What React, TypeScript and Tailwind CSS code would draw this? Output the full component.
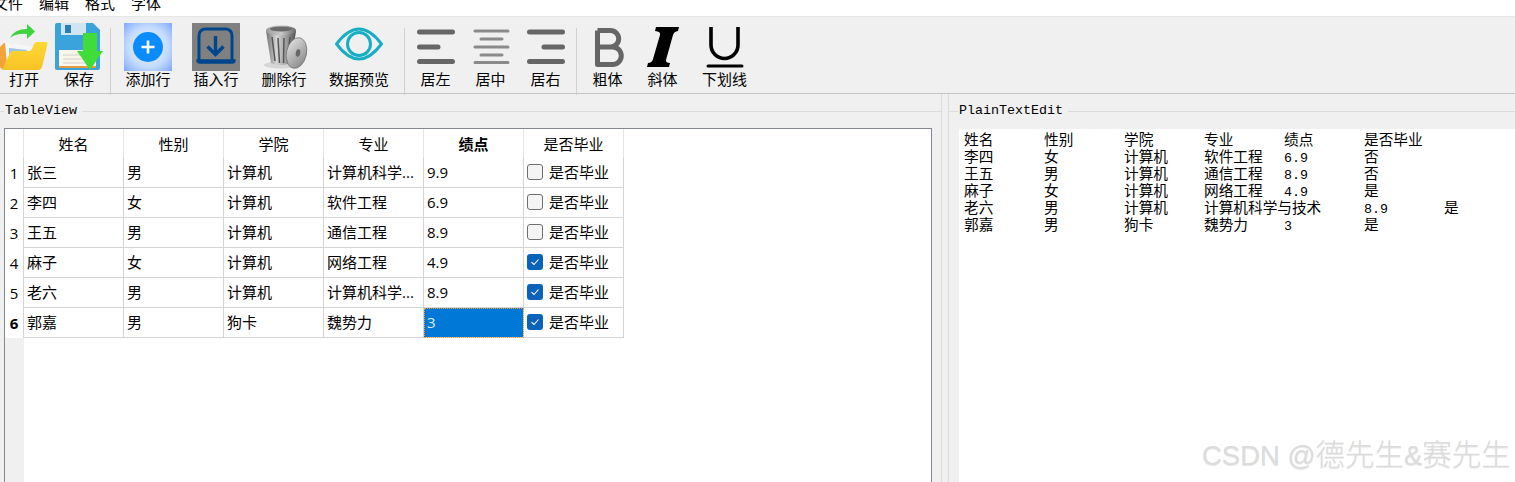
import React from "react";

const OpenIcon = () => (
  <svg width="48" height="48" viewBox="0 0 48 48">
    <defs>
      <linearGradient id="fold" x1="0" y1="0" x2="0" y2="1">
        <stop offset="0" stopColor="#fdd835" />
        <stop offset="1" stopColor="#f8c325" />
      </linearGradient>
    </defs>
    <path d="M0 24 L4 20 L12 20 L12 46 L3 46 Q0 46 0 43 Z" fill="#f2a33a" />
    <path d="M5 19 L32 24 L28 34 L7 42 Z" fill="#f4f6f8" />
    <path d="M9 25 L27 27 L27 30 L9 33 Z" fill="#9fc3dc" />
    <path d="M2 47 L10 30 Q11 28 13 28 L29 28 Q31 28 32 26 L34 21 Q35 19 37 19 L46 19 Q48 19 47.5 21 L42 44 Q41 47 38 47 Z" fill="url(#fold)" />
    <path d="M10 15 Q14 6 27 6 L27 1 L35 8.5 L27 16 L27 11 Q17 10 10 15 Z" fill="#3fd43f" />
  </svg>
);

const SaveIcon = () => (
  <svg width="48" height="48" viewBox="0 0 48 48">
    <path d="M2 0 L38 0 L45 7 L45 45 Q45 47 43 47 L2 47 Q0 47 0 45 L0 2 Q0 0 2 0 Z" fill="#3ba3db" />
    <rect x="6" y="0" width="25" height="12" fill="#cfe6f2" />
    <rect x="10" y="2" width="6" height="8" fill="#2a7fb0" />
    <rect x="4" y="27" width="37" height="17" fill="#fbf6ea" />
    <rect x="4" y="43" width="37" height="2" fill="#e59a3c" />
    <path d="M8 32 H36 M8 36 H36 M8 40 H36" stroke="#cfcfcf" strokeWidth="1" />
    <rect x="28" y="10" width="14" height="19" fill="#3fdc3a" />
    <path d="M22 28 L48 28 L35 47 Z" fill="#3fdc3a" />
  </svg>
);

const AddIcon = () => (
  <svg width="48" height="48" viewBox="0 0 48 48">
    <defs>
      <radialGradient id="addbg" cx="0.5" cy="0.5" r="0.7">
        <stop offset="0" stopColor="#f2f7ff" />
        <stop offset="0.6" stopColor="#c4dbff" />
        <stop offset="1" stopColor="#7fa9fb" />
      </radialGradient>
    </defs>
    <rect width="48" height="48" fill="url(#addbg)" />
    <circle cx="24" cy="24" r="15" fill="#0a8cff" />
    <path d="M17.5 24 H30.5 M24 17.5 V30.5" stroke="#fff" strokeWidth="2.6" />
  </svg>
);

const InsertIcon = () => (
  <svg width="48" height="48" viewBox="0 0 48 48">
    <rect width="48" height="48" fill="#808080" />
    <path d="M7 37 V13 Q7 6 14 6 L33 6 Q40 6 40 13 V37" fill="none" stroke="#00468c" strokeWidth="3" />
    <path d="M5 37 H43 Q43 40 40 40 H8 Q5 40 5 37 Z" fill="#00468c" stroke="#00468c" strokeWidth="1.5" strokeLinejoin="round" />
    <path d="M23.5 13 V30 M15.5 23.5 L23.5 31.5 L31.5 23.5" fill="none" stroke="#00468c" strokeWidth="3.4" />
  </svg>
);

const TrashIcon = () => (
  <svg width="48" height="48" viewBox="0 0 48 48">
    <defs>
      <linearGradient id="bin" x1="0" y1="0" x2="1" y2="0">
        <stop offset="0" stopColor="#6e6e6e" />
        <stop offset="0.35" stopColor="#d5d5d5" />
        <stop offset="0.7" stopColor="#9a9a9a" />
        <stop offset="1" stopColor="#4e4e4e" />
      </linearGradient>
      <linearGradient id="lid" x1="0" y1="0" x2="1" y2="1">
        <stop offset="0" stopColor="#e8e8e8" />
        <stop offset="1" stopColor="#808080" />
      </linearGradient>
      <linearGradient id="rim" x1="0" y1="0" x2="1" y2="0">
        <stop offset="0" stopColor="#9c9c9c" />
        <stop offset="0.5" stopColor="#c8c8c8" />
        <stop offset="1" stopColor="#6a6a6a" />
      </linearGradient>
    </defs>
    <ellipse cx="22" cy="42" rx="18" ry="3.5" fill="#d6d6d6" />
    <path d="M6 8 L11 40 Q21 44 31 40 L36 8 Z" fill="url(#bin)" />
    <path d="M12 14 L15 38 M18 15 L19.5 40 M24 15 L23.5 40 M30 14 L27.5 39" stroke="#555" strokeWidth="1.5" />
    <ellipse cx="21" cy="7.5" rx="15" ry="5" fill="url(#rim)" />
    <ellipse cx="21" cy="6" rx="11" ry="2.4" fill="#6a6a6a" />
    <ellipse cx="36.5" cy="30" rx="10" ry="15.5" transform="rotate(12 36.5 30)" fill="url(#lid)" stroke="#6a6a6a" strokeWidth="0.7" />
    <ellipse cx="38" cy="30" rx="2.2" ry="3.8" transform="rotate(12 38 30)" fill="#666" />
  </svg>
);

const EyeIcon = () => (
  <svg width="48" height="48" viewBox="0 0 48 48">
    <path d="M1.5 21 Q24 -9 46.5 21 Q24 51 1.5 21 Z" fill="none" stroke="#17aec5" strokeWidth="3" strokeLinejoin="round" />
    <circle cx="24" cy="21" r="11.5" fill="none" stroke="#17aec5" strokeWidth="3" />
  </svg>
);

const AlignLeftIcon = () => (
  <svg width="48" height="48" viewBox="0 0 48 48">
    <path d="M7.5 9 H40.5 M7.5 24 H26 M7.5 38.5 H40.5" stroke="#666" strokeWidth="5" strokeLinecap="round" />
  </svg>
);
const AlignCenterIcon = () => (
  <svg width="48" height="48" viewBox="0 0 48 48">
    <path d="M8 8 H41 M14 16 H35 M8 24 H41 M14 32 H35 M8 39.5 H41" stroke="#8a8a8a" strokeWidth="3" strokeLinecap="round" />
  </svg>
);
const AlignRightIcon = () => (
  <svg width="48" height="48" viewBox="0 0 48 48">
    <path d="M7.5 9 H40.5 M22 24 H40.5 M7.5 38.5 H40.5" stroke="#666" strokeWidth="5" strokeLinecap="round" />
  </svg>
);
const BoldIcon = () => (
  <svg width="48" height="48" viewBox="0 0 48 48">
    <path d="M13.5 7.5 H26.5 a8.2 8.2 0 0 1 0 16.4 H13.5 M26.5 23.9 H28.5 a8.8 8.8 0 0 1 0 17.6 H13.5 V7.5" fill="none" stroke="#666" strokeWidth="5" strokeLinejoin="round" />
  </svg>
);
const ItalicIcon = () => (
  <svg width="48" height="48" viewBox="0 0 48 48">
    <path d="M17 4 L40 4 L39 8 Q35 8.5 34 12 L27 37 Q26.5 40 31 40 L30 44 L8 44 L9 40 Q13 40 14 36 L21 12 Q22 8.5 16 8 Z" fill="#000" />
  </svg>
);
const UnderlineIcon = () => (
  <svg width="48" height="48" viewBox="0 0 48 48">
    <path d="M10 4 V22 a13.5 13.5 0 0 0 27 0 V4" fill="none" stroke="#000" strokeWidth="3.6" />
    <path d="M7 43 H41" stroke="#000" strokeWidth="3" strokeLinecap="round" />
  </svg>
);

const ToolButton = ({ label, icon, w }: { label: string; icon: React.ReactNode; w: string }) => (
  <div className={`flex flex-col items-center shrink-0 ${w}`}>
    {icon}
    <span className="leading-[17px] text-[15px] text-black whitespace-nowrap">{label}</span>
  </div>
);

const Sep = ({ left }: { left: string }) => <div className={`w-px h-[67px] bg-[#d0d0d0] mt-[5px] mr-[3px] shrink-0 ${left}`} />;

const headers = ["姓名", "性别", "学院", "专业", "绩点", "是否毕业"];
const rows: [string, string, string, string, string, boolean][] = [
  ["张三", "男", "计算机", "计算机科学...", "9.9", false],
  ["李四", "女", "计算机", "软件工程", "6.9", false],
  ["王五", "男", "计算机", "通信工程", "8.9", false],
  ["麻子", "女", "计算机", "网络工程", "4.9", true],
  ["老六", "男", "计算机", "计算机科学...", "8.9", true],
  ["郭嘉", "男", "狗卡", "魏势力", "3", true],
];

const Check = ({ on }: { on: boolean }) =>
  on ? (
    <span className="w-4 h-4 rounded-[3px] bg-[#0a63b8] flex items-center justify-center shrink-0">
      <svg width="10" height="8" viewBox="0 0 10 8">
        <path d="M1.5 4.2 L4 6.5 L8.5 1.5" fill="none" stroke="#fff" strokeWidth="1.1" />
      </svg>
    </span>
  ) : (
    <span className="w-4 h-4 rounded-[3px] border border-[#6e6e6e] bg-[#f4f4f4] shrink-0" />
  );

const cellCls = "h-[30px] border-b border-r border-[#d4d4d4] pl-[3px] flex items-center whitespace-nowrap overflow-hidden";

const plain = [
  ["姓名", "性别", "学院", "专业", "绩点", "是否毕业"],
  ["李四", "女", "计算机", "软件工程", "6.9", "否"],
  ["王五", "男", "计算机", "通信工程", "8.9", "否"],
  ["麻子", "女", "计算机", "网络工程", "4.9", "是"],
  ["老六", "男", "计算机", "计算机科学与技术", "8.9", "是"],
  ["郭嘉", "男", "狗卡", "魏势力", "3", "是"],
];

const GroupTitle = ({ title, lead }: { title: string; lead: string }) => (
  <div className="flex items-center h-4">
    <div className={`h-px bg-[#dcdcdc] shrink-0 ${lead}`} />
    <span className="font-['Liberation_Mono',monospace] text-[13.33px] leading-4 text-black px-px">{title}</span>
    <div className="h-px bg-[#dcdcdc] flex-1 ml-1" />
  </div>
);

export default function App() {
  return (
    <div className="relative w-[1515px] h-[482px] overflow-hidden bg-[#f0f0f0] text-[15px] text-black font-['Open_Sans','Noto_Sans_CJK_SC',sans-serif]">
      {/* menu */}
      <div className="h-4 bg-white overflow-hidden flex -ml-[15px]">
        {["文件", "编辑", "格式", "字体"].map((m) => (
          <span key={m} className="px-2 leading-[16px] -mt-[5px] h-5 whitespace-nowrap">{m}</span>
        ))}
      </div>
      <div className="h-px bg-[#e6e6e6]" />
      {/* toolbar */}
      <div className="h-[77px] border-b border-[#c4c4c4] flex pt-[6px] -ml-[3.5px]">
        <ToolButton label="打开" icon={<OpenIcon />} w="w-[55px]" />
        <ToolButton label="保存" icon={<SaveIcon />} w="w-[55px]" />
        <Sep left="ml-[3.5px]" />
        <ToolButton label="添加行" icon={<AddIcon />} w="w-[68px]" />
        <ToolButton label="插入行" icon={<InsertIcon />} w="w-[68px]" />
        <ToolButton label="删除行" icon={<TrashIcon />} w="w-[68px]" />
        <ToolButton label="数据预览" icon={<EyeIcon />} w="w-[82px]" />
        <Sep left="ml-[4px]" />
        <ToolButton label="居左" icon={<AlignLeftIcon />} w="w-[55px]" />
        <ToolButton label="居中" icon={<AlignCenterIcon />} w="w-[55px]" />
        <ToolButton label="居右" icon={<AlignRightIcon />} w="w-[55px]" />
        <Sep left="ml-[3px]" />
        <ToolButton label="粗体" icon={<BoldIcon />} w="w-[55px]" />
        <ToolButton label="斜体" icon={<ItalicIcon />} w="w-[55px]" />
        <ToolButton label="下划线" icon={<UnderlineIcon />} w="w-[69px]" />
      </div>
      {/* main */}
      <div className="flex h-[388px]">
        <div className="w-[942px] shrink-0 border-r border-[#dcdcdc] pt-[9px]">
          <GroupTitle title="TableView" lead="w-[4px]" />
          <div className="mt-[9px] ml-1 mr-[9px] h-[400px] border border-[#828790] bg-white flex">
            <div className="w-[19px] shrink-0 flex flex-col">
              <div className="h-[29px] border-r border-[#e6e6e6]" />
              {rows.map((_, i) => (
                <div
                  key={i}
                  className={`h-[30px] flex items-center justify-center border-r border-[#d4d4d4] ${i === 5 ? "font-bold" : ""}`}
                >
                  {i + 1}
                </div>
              ))}
              <div className="flex-1 bg-[#f0f0f0]" />
            </div>
            <div className="grid grid-cols-[repeat(6,100px)] content-start">
              {headers.map((h) => (
                <div
                  key={h}
                  className={`h-[29px] border-r border-[#e6e6e6] flex items-center justify-center pt-px ${h === "绩点" ? "font-bold" : ""}`}
                >
                  {h}
                </div>
              ))}
              {rows.map((r, i) => (
                <React.Fragment key={i}>
                  <div className={cellCls}>{r[0]}</div>
                  <div className={cellCls}>{r[1]}</div>
                  <div className={cellCls}>{r[2]}</div>
                  <div className={cellCls}>{r[3]}</div>
                  {i === 5 ? (
                    <div className="h-[30px] border-b border-r border-[#d4d4d4] pl-[3px] flex items-center bg-[#0078d7] text-[#dfeeff] outline-1 outline-dotted outline-[#f0a030] -outline-offset-1">
                      {r[4]}
                    </div>
                  ) : (
                    <div className={cellCls}>{r[4]}</div>
                  )}
                  <div className={`${cellCls} gap-[6px] pb-[2px]`}>
                    <Check on={r[5]} />
                    <span className="translate-y-px">是否毕业</span>
                  </div>
                </React.Fragment>
              ))}
            </div>
          </div>
        </div>
        <div className="flex-1 ml-[6px] border-l border-[#dcdcdc] pt-[9px] min-w-0">
          <GroupTitle title="PlainTextEdit" lead="w-[9px]" />
          <div className="mt-[10px] ml-[10px] h-[400px] bg-white pt-1 pl-[5px]">
            {plain.map((row, i) => (
              <div
                key={i}
                className="h-[17px] leading-[17px] text-[14.67px] whitespace-pre [tab-size:80px] font-['Liberation_Mono','Noto_Sans_CJK_SC',monospace]"
              >
                {row.map((c, j) => (
                  <React.Fragment key={j}>
                    {j > 0 ? "\t" : ""}
                    {/^[\d.]+$/.test(c) ? <span className="text-[13.33px]">{c}</span> : c}
                  </React.Fragment>
                ))}
              </div>
            ))}
          </div>
        </div>
      </div>
      {/* watermark */}
      <div className="absolute left-[1202px] top-[434px] text-[29.5px] leading-9 whitespace-nowrap text-[#dcdcdc] font-['Noto_Sans_CJK_SC',sans-serif] font-light [text-shadow:0_1px_1px_rgba(0,0,0,0.1)]">
        <span className="font-['Liberation_Sans',sans-serif] text-[27.5px] font-normal">CSDN @</span>德先生<span className="font-['Liberation_Sans',sans-serif] text-[27.5px] font-normal">&amp;</span>赛先生
      </div>
    </div>
  );
}
